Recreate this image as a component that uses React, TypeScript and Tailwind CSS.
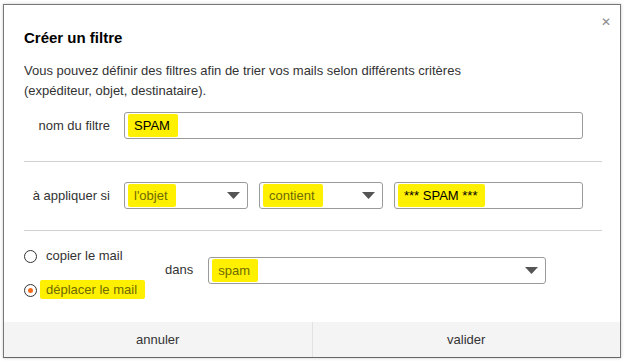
export default function App() {
  return (
    <div className="w-[625px] h-[362px] bg-white pt-[4px] pl-[3px] font-['Liberation_Sans',Arial,sans-serif] text-[13px] text-[#333]">
      <FilterDialog />
    </div>
  );
}

function Caret() {
  return (
    <svg width="13" height="7" viewBox="0 0 13 7" className="shrink-0">
      <polygon points="0,0 13,0 6.5,7" fill="#555" />
    </svg>
  );
}

function Mark({ children, dark }: { children: React.ReactNode; dark?: boolean }) {
  return (
    <span
      className={`bg-[#fff000] -ml-[6px] pl-[6px] pr-[8px] py-[2px] rounded-[2px] ${
        dark ? "text-black" : "text-[#6e6a00]"
      }`}
    >
      {children}
    </span>
  );
}

function Select({ value, className }: { value: string; className: string }) {
  return (
    <div
      className={`h-[27px] border border-[#9a9a9a] rounded-[3px] flex items-center justify-between pl-[9px] pr-[7px] ${className}`}
    >
      <Mark>{value}</Mark>
      <Caret />
    </div>
  );
}

function Radio({ checked, label }: { checked?: boolean; label: string }) {
  return (
    <div className="flex items-center h-[20px]">
      <span className="w-[13px] h-[13px] rounded-full border-[1.5px] border-[#333] flex items-center justify-center shrink-0">
        {checked && <span className="w-[5px] h-[5px] rounded-full bg-[#f26b1d]" />}
      </span>
      <span className="ml-[9px]">
        {checked ? <Mark dark={false}>{label}</Mark> : label}
      </span>
    </div>
  );
}

function FilterDialog() {
  return (
    <div className="w-[618px] h-[354px] border border-[#777] border-b-[#666] shadow-[0_0_3px_#c8c8c8] flex flex-col relative">
      <button className="absolute right-[9px] top-[11px] text-[#8a8a8a] text-[12px] leading-none">✕</button>

      <div className="pl-[20px] pr-[18px] pt-[23px] flex flex-col">
        <h2 className="text-[15px] leading-[20px] font-bold text-black">Créer un filtre</h2>

        <p className="mt-[13px] leading-[20px]">
          Vous pouvez définir des filtres afin de trier vos mails selon différents critères
          <br />
          (expéditeur, objet, destinataire).
        </p>

        {/* nom du filtre */}
        <div className="mt-[11px] flex items-center pr-[19px]">
          <label className="w-[86px] text-right">nom du filtre</label>
          <div className="ml-[14px] flex-1 h-[27px] border border-[#9a9a9a] rounded-[3px] flex items-center pl-[9px] text-black">
            <Mark dark>SPAM</Mark>
          </div>
        </div>

        <div className="mt-[22px] h-px bg-[#d0d0d0]" />

        {/* condition */}
        <div className="mt-[20px] flex items-center pr-[19px]">
          <label className="w-[86px] text-right">à appliquer si</label>
          <Select value="l'objet" className="ml-[14px] w-[124px]" />
          <Select value="contient" className="ml-[11px] w-[124px]" />
          <div className="ml-[11px] flex-1 h-[27px] border border-[#9a9a9a] rounded-[3px] flex items-center pl-[9px] text-black">
            <Mark dark>*** SPAM ***</Mark>
          </div>
        </div>

        <div className="mt-[21px] h-px bg-[#d0d0d0]" />

        {/* action */}
        <div className="mt-[15px] flex items-start">
          <div className="flex flex-col gap-[14px] w-[141px]">
            <Radio label="copier le mail" />
            <Radio checked label="déplacer le mail" />
          </div>
          <span className="mt-[14px]">dans</span>
          <Select value="spam" className="mt-[11px] ml-[15px] w-[338px]" />
        </div>
      </div>

      <div className="mt-auto h-[35px] bg-[#f4f4f4] flex">
        <button className="flex-1 border-r border-[#e2e2e2] text-[#333]">annuler</button>
        <button className="flex-1 text-[#333]">valider</button>
      </div>
    </div>
  );
}
